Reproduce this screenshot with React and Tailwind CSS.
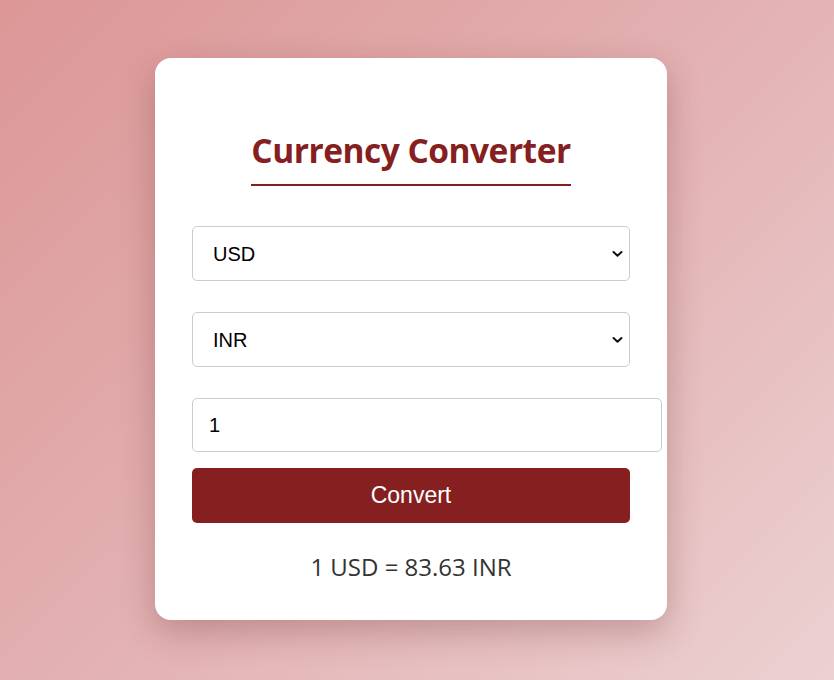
import React from "react";

function Chevron() {
  return (
    <svg className="pointer-events-none absolute right-[7px] top-1/2 -translate-y-1/2" width="11" height="7" viewBox="0 0 11 7" fill="none">
      <path d="M1.5 1.5 L5.5 5.2 L9.5 1.5" stroke="#111" strokeWidth="2" strokeLinecap="round" strokeLinejoin="round" />
    </svg>
  );
}

function Select({ value }) {
  return (
    <div className="relative w-[438px]">
      <select
        defaultValue={value}
        className="h-[55px] w-full appearance-none rounded-[5px] border border-[#cccccc] bg-white pl-[20px] text-[20px] text-black outline-none"
        style={{ fontFamily: '"Liberation Sans", Arial, sans-serif' }}
      >
        <option>USD</option>
        <option>INR</option>
        <option>EUR</option>
      </select>
      <Chevron />
    </div>
  );
}

export default function App() {
  return (
    <div className="flex h-[680px] w-full items-center justify-center bg-[linear-gradient(135deg,#dc9696_0%,#e4b4b5_55%,#ecd1d2_100%)] pr-[12px] pb-[2px]">
      <div className="flex w-[512px] flex-col items-start rounded-[16px] bg-white px-[37px] pt-[70px] pb-[38px] shadow-[0_12px_35px_rgba(90,30,30,0.28)]">
        <div className="flex w-[438px] justify-center">
          <h1
            className="border-b-2 border-[#862020] pb-[12px] text-[33.5px] font-bold leading-[44px] text-[#862020]"
            style={{ fontFamily: '"Open Sans", "Noto Sans", sans-serif', letterSpacing: "-0.5px" }}
          >
            Currency Converter
          </h1>
        </div>
        <div className="mt-[40px] flex flex-col gap-[31px]">
          <Select value="USD" />
          <Select value="INR" />
        </div>
        <input
          defaultValue="1"
          className="mt-[31px] h-[54px] w-[470px] rounded-[5px] border border-[#cccccc] bg-white px-[16px] text-[20px] text-black outline-none"
          style={{ fontFamily: '"Liberation Sans", Arial, sans-serif' }}
        />
        <button
          className="mt-[16px] h-[55px] w-[438px] rounded-[5px] bg-[#862020] text-[23px] text-white"
          style={{ fontFamily: '"Liberation Sans", Arial, sans-serif' }}
        >
          Convert
        </button>
        <p
          className="mt-[29px] w-[438px] text-center text-[24px] leading-[30px] text-[#333333]"
          style={{ fontFamily: '"Open Sans", "Noto Sans", sans-serif' }}
        >
          1 USD = 83.63 INR
        </p>
      </div>
    </div>
  );
}
